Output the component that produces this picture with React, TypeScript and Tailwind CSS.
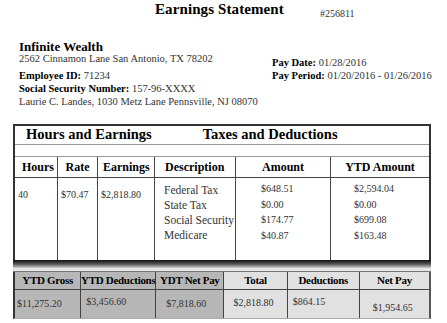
const serif = { fontFamily: '"Liberation Serif", "DejaVu Serif", serif' }

const deductions = [
  { label: 'Federal Tax', amount: '$648.51', ytd: '$2,594.04' },
  { label: 'State Tax', amount: '$0.00', ytd: '$0.00' },
  { label: 'Social Security', amount: '$174.77', ytd: '$699.08' },
  { label: 'Medicare', amount: '$40.87', ytd: '$163.48' },
]

const summary = [
  { head: 'YTD Gross', value: '$11,275.20', dark: true, w: 'w-[67px]', vcls: 'pl-0.5 pt-[6px]' },
  { head: 'YTD Deductions', value: '$3,456.60', dark: true, w: 'w-[75px]', vcls: 'pl-[5px] pt-[4px]' },
  { head: 'YDT Net Pay', value: '$7,818.60', dark: true, w: 'w-[69px]', vcls: 'pl-[10px] pt-[6px]' },
  { head: 'Total', value: '$2,818.80', dark: false, w: 'w-[64px]', vcls: 'pl-[9px] pt-[5px]' },
  { head: 'Deductions', value: '$864.15', dark: false, w: 'w-[73px]', vcls: 'pl-[5px] pt-[4px]' },
  { head: 'Net Pay', value: '$1,954.65', dark: false, w: 'w-[70px]', vcls: 'pl-[13px] pt-[10px]' },
]

export default function App() {
  return (
    <div className="w-[447px] h-[323px] bg-white text-[#222] overflow-hidden" style={serif}>
      {/* Title */}
      <div className="flex items-start pt-[2px] h-[22px]">
        <h1 className="ml-[155px] text-[15px] font-bold leading-none tracking-[0.1px] text-black">Earnings Statement</h1>
        <span className="ml-[36px] mt-[7px] text-[10px] leading-none text-[#333]">#256811</span>
      </div>

      {/* Company / employee */}
      <div className="flex mt-[18px] pl-[19px]">
        <div className="w-[253px] text-[10.5px] leading-none">
          <p className="text-[13px] font-bold text-black leading-none">Infinite Wealth</p>
          <p className="mt-[1px] text-[#333]">2562 Cinnamon Lane San Antonio, TX 78202</p>
          <p className="mt-[6px] text-[#333]"><span className="font-bold text-black">Employee ID:</span> 71234</p>
          <p className="mt-[3px] text-[#333]"><span className="font-bold text-black">Social Security Number:</span> 157-96-XXXX</p>
          <p className="mt-[2px] text-[#333]">Laurie C. Landes, 1030 Metz Lane Pennsville, NJ 08070</p>
        </div>
        <div className="mt-[18px] text-[10.5px] leading-none text-[#333]">
          <p><span className="font-bold text-black">Pay Date:</span> 01/28/2016</p>
          <p className="mt-[2px]"><span className="font-bold text-black">Pay Period:</span> 01/20/2016 - 01/26/2016</p>
        </div>
      </div>

      {/* Main table */}
      <div className="ml-[13px] w-[418px] mt-[17px]">
        <div className="border-2 border-b-0 border-[#333]">
          <div className="h-[19px] flex items-center border-b border-[#999] text-[14.5px] font-bold text-black">
            <span className="ml-[11px]">Hours and Earnings</span>
            <span className="ml-[51px]">Taxes and Deductions</span>
          </div>
          <div className="h-[12px] border-b border-[#999]" />
          <div className="flex h-[21px] border-b border-[#444] text-[12px] font-bold text-black">
            <div className="w-[43px] flex items-center pl-[7px] border-r border-[#444]">Hours</div>
            <div className="w-[40px] flex items-center justify-center border-r border-[#444]">Rate</div>
            <div className="w-[57px] flex items-center pl-[5px] border-r border-[#444]">Earnings</div>
            <div className="w-[81px] flex items-center pl-[10px] border-r border-[#444]">Description</div>
            <div className="w-[95px] flex items-center justify-center border-r border-[#444]">Amount</div>
            <div className="flex-1 flex items-center justify-center">YTD Amount</div>
          </div>
          <div className="flex h-[82px] text-[10px] text-[#333]">
            <div className="w-[43px] pl-[3px] pt-[9px] border-r border-[#444]">40</div>
            <div className="w-[40px] pl-[3px] pt-[9px] border-r border-[#444]">$70.47</div>
            <div className="w-[57px] pl-[3px] pt-[9px] border-r border-[#444]">$2,818.80</div>
            <div className="w-[81px] pl-[9px] pt-[5px] border-r border-[#444] text-[11.5px] leading-[15px]">
              {deductions.map(d => <p key={d.label}>{d.label}</p>)}
            </div>
            <div className="w-[95px] pl-[25px] pt-[3px] border-r border-[#444] leading-[15.5px]">
              {deductions.map(d => <p key={d.label}>{d.amount}</p>)}
            </div>
            <div className="flex-1 pl-[23px] pt-[3px] leading-[15.5px]">
              {deductions.map(d => <p key={d.label}>{d.ytd}</p>)}
            </div>
          </div>
        </div>

        {/* shaded separator */}
        <div className="h-[8px] bg-linear-to-b from-[#111] via-[#555] to-[#cfcfcf]" />
        <div className="h-[4px] border-b border-[#777] bg-[#e6e6e6]" />

        {/* Summary */}
        <div className="flex border-l-2 border-r-2 border-b border-l-[#333] border-r-[#555] border-b-[#aaa]">
          {summary.map((s, i) => (
            <div
              key={s.head}
              className={`${s.w} flex flex-col ${s.dark ? 'bg-[#b7b7b7]' : 'bg-[#e2e1e2]'} ${i < summary.length - 1 ? 'border-r border-[#444]' : ''}`}
            >
              <div className="h-[18px] flex items-center justify-center border-b border-[#444] text-[11px] tracking-[-0.3px] font-bold text-black whitespace-nowrap">
                {s.head}
              </div>
              <div className={`h-[28px] text-[10px] text-[#333] ${s.vcls}`}>{s.value}</div>
            </div>
          ))}
        </div>
      </div>
    </div>
  )
}
